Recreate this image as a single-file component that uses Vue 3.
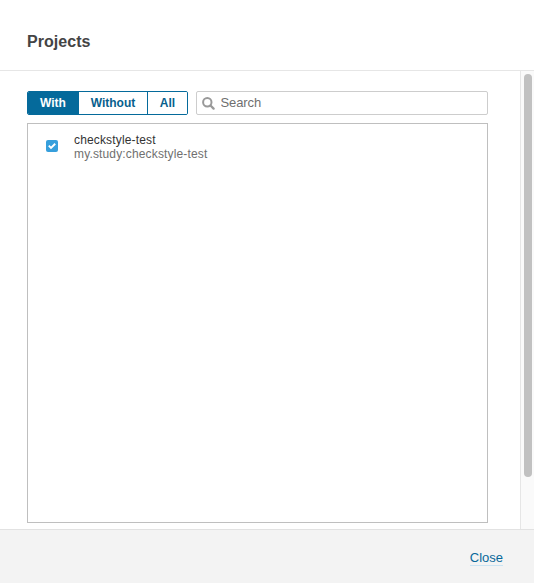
<script setup>
import { ref, computed } from 'vue'

const filters = ['With', 'Without', 'All']
const active = ref('With')
const query = ref('')
const projects = ref([
  { name: 'checkstyle-test', key: 'my.study:checkstyle-test', selected: true },
])
const shown = computed(() => projects.value.filter((p) => p.name.includes(query.value)))
</script>

<template>
  <div class="modal">
    <header class="head"><h2>Projects</h2></header>
    <div class="body">
      <main class="content">
        <div class="toolbar">
          <div class="group">
            <button
              v-for="f in filters"
              :key="f"
              :class="['seg', f.toLowerCase(), { active: f === active }]"
              @click="active = f"
            >{{ f }}</button>
          </div>
          <label class="search">
            <svg width="13" height="13" viewBox="0 0 13 13" fill="none" stroke="#999">
              <circle cx="5.3" cy="5.3" r="4.2" stroke-width="2" />
              <path d="M8.5 8.5L11.6 11.6" stroke-width="2.3" stroke-linecap="round" />
            </svg>
            <input v-model="query" type="text" placeholder="Search" />
          </label>
        </div>
        <ul class="list">
          <li v-for="p in shown" :key="p.key" class="item" @click="p.selected = !p.selected">
            <span :class="['check', { on: p.selected }]">
              <svg v-if="p.selected" width="12" height="12" viewBox="0 0 12 12" fill="none">
                <path d="M2.8 5.7L5 7.9L9.2 3.8" stroke="#fff" stroke-width="1.9" />
              </svg>
            </span>
            <span class="text">
              <span class="name">{{ p.name }}</span>
              <span class="key">{{ p.key }}</span>
            </span>
          </li>
        </ul>
      </main>
      <div class="track"><div class="thumb"></div></div>
    </div>
    <footer class="foot"><a class="close">Close</a></footer>
  </div>
</template>

<style>
body {
  margin: 0;
  overflow: hidden;
}
</style>

<style scoped>
* {
  box-sizing: border-box;
}
.modal {
  display: flex;
  flex-direction: column;
  height: 583px;
  background: #fff;
  font-family: 'Liberation Sans', Arial, sans-serif;
  font-size: 13px;
}
.head {
  height: 71px;
  padding: 32px 27px 0;
  border-bottom: 1px solid #e6e6e6;
}
h2 {
  margin: 0;
  font-size: 16px;
  line-height: 20px;
  color: #444;
  letter-spacing: 0.05px;
}
.body {
  display: flex;
  height: 458px;
}
.content {
  flex: 1;
  padding: 20px 32px 0 27px;
}
.toolbar {
  display: flex;
  gap: 8px;
  height: 24px;
}
.group {
  display: flex;
  width: 161px;
  border: 1px solid #056a9b;
  border-radius: 2px;
  overflow: hidden;
}
.seg {
  padding: 0;
  border: 0;
  background: #fff;
  color: #07608d;
  font: bold 12px/22px 'Liberation Sans', Arial, sans-serif;
}
.seg + .seg {
  border-left: 1px solid #056a9b;
}
.with {
  width: 50px;
}
.without {
  width: 69px;
}
.all {
  flex: 1;
}
.seg.active {
  background: #056a9b;
  color: #fff;
}
.search {
  display: flex;
  flex: 1;
  align-items: center;
  padding-left: 5px;
  border: 1px solid #cdcdcd;
  border-radius: 2px;
}
.search svg {
  flex: none;
}
.search input {
  flex: 1;
  min-width: 0;
  height: 20px;
  margin-left: 5.5px;
  padding: 0;
  border: 0;
  outline: 0;
  background: none;
  color: #444;
  font: 13px/20px 'Liberation Sans', Arial, sans-serif;
  letter-spacing: -0.1px;
}
.search input::placeholder {
  color: #6f6f6f;
  opacity: 1;
}
.list {
  height: 400px;
  margin: 8px 0 0;
  padding: 9px 18px;
  border: 1px solid #bfbfbf;
  list-style: none;
}
.item {
  display: flex;
  gap: 16px;
}
.check {
  width: 12px;
  height: 12px;
  margin-top: 7px;
  border: 1px solid #4b9fd5;
  border-radius: 2px;
}
.check.on {
  border: 0;
  background: #369fdc;
}
.check svg {
  display: block;
}
.text {
  display: flex;
  flex-direction: column;
  font-size: 12px;
  line-height: 14px;
  letter-spacing: 0.15px;
}
.name {
  color: #333;
}
.key {
  color: #707070;
}
.track {
  width: 14px;
  padding: 3px 2px 0 3px;
  border-left: 1px solid #e6e6e6;
  background: #fafafa;
}
.thumb {
  width: 8px;
  height: 403px;
  border-radius: 4px;
  background: #c1c1c1;
}
.foot {
  display: flex;
  flex: 1;
  justify-content: flex-end;
  padding: 20px 31px 0 0;
  border-top: 1px solid #e2e2e2;
  background: #f3f3f3;
}
.close {
  height: 16px;
  border-bottom: 1px solid #cae3f2;
  color: #07689a;
  font-size: 13px;
  line-height: 15px;
}
</style>
